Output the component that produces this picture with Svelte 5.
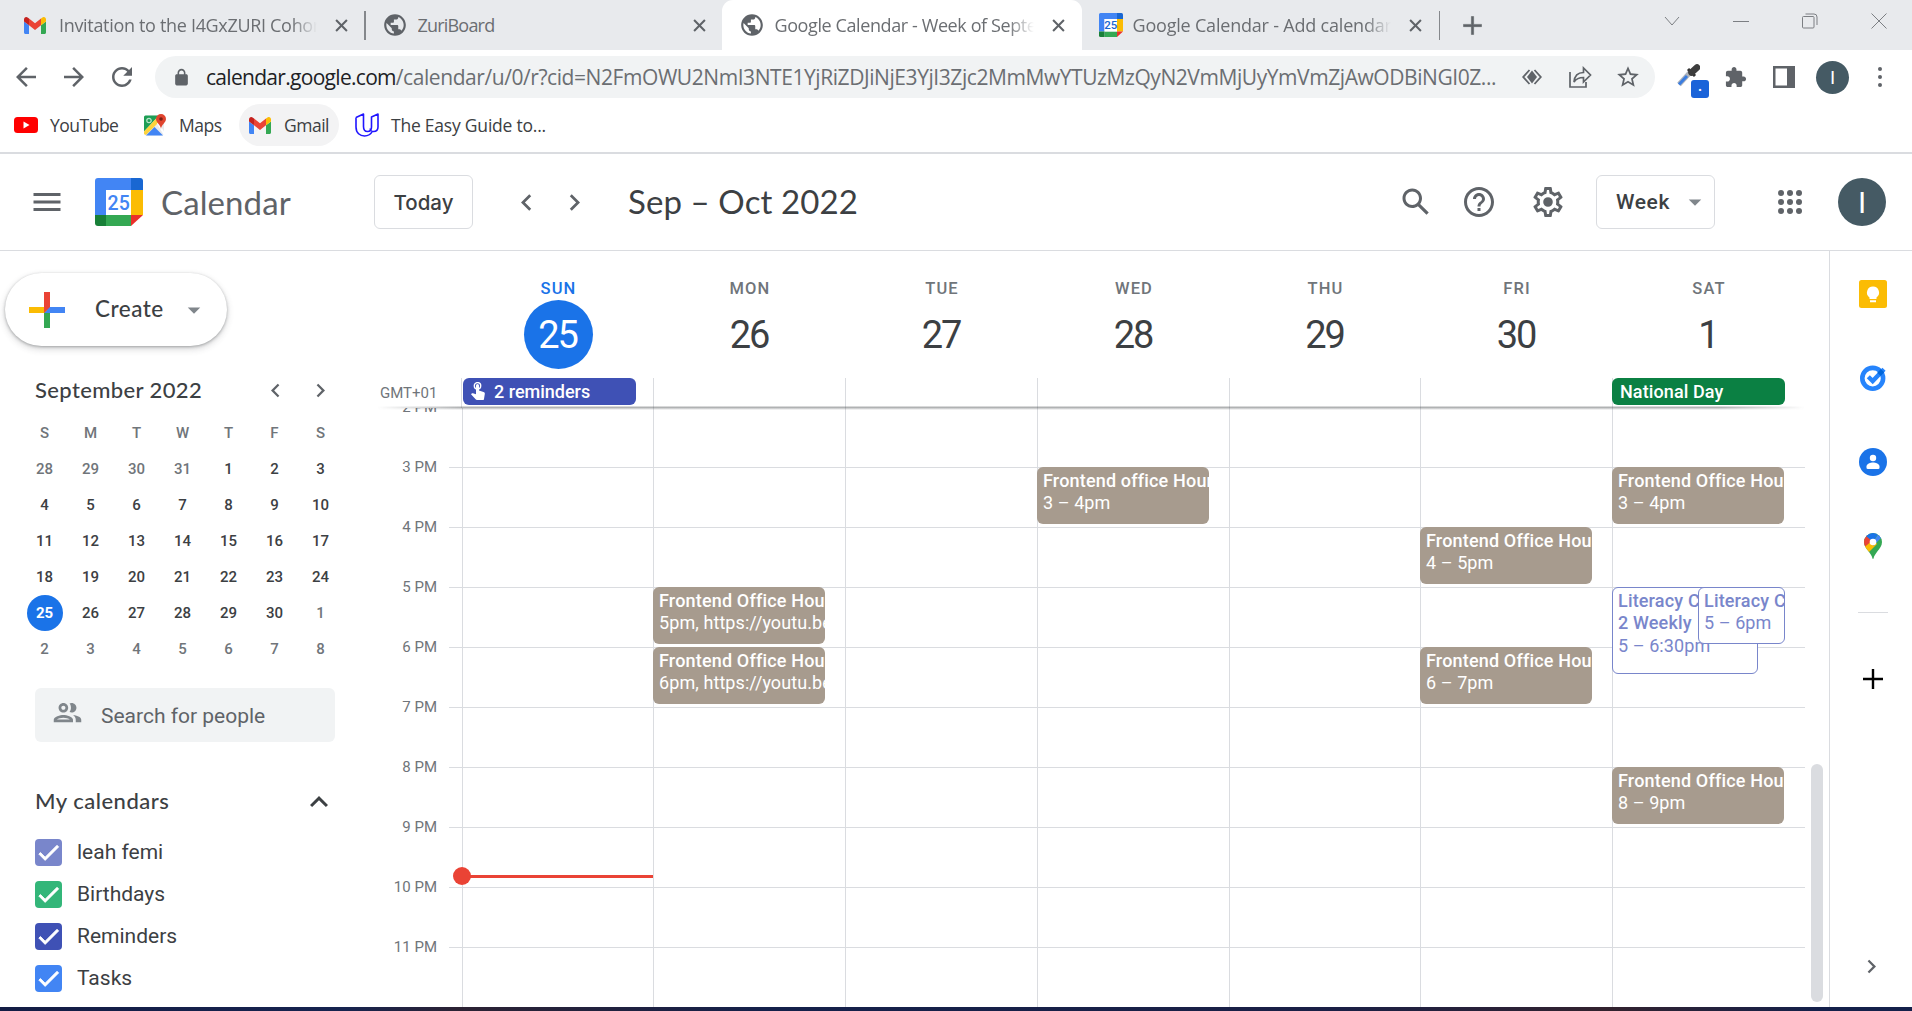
<script>
  const paths = {
    back: 'M20 11H7.83l5.59-5.59L12 4l-8 8 8 8 1.41-1.41L7.83 13H20v-2z',
    forward: 'M12 4l-1.41 1.41L16.17 11H4v2h12.17l-5.58 5.59L12 20l8-8z',
    reload:
      'M17.65 6.35C16.2 4.9 14.21 4 12 4c-4.42 0-7.99 3.58-7.99 8s3.57 8 7.99 8c3.73 0 6.84-2.55 7.73-6h-2.08c-.82 2.33-3.04 4-5.65 4-3.31 0-6-2.69-6-6s2.69-6 6-6c1.66 0 3.14.69 4.22 1.78L13 11h7V4l-2.35 2.35z',
    globe:
      'M12 2C6.48 2 2 6.48 2 12s4.48 10 10 10 10-4.48 10-10S17.52 2 12 2zm-1 17.93c-3.95-.49-7-3.85-7-7.93 0-.62.08-1.21.21-1.79L9 15v1c0 1.1.9 2 2 2v1.93zm6.9-2.54c-.26-.81-1-1.39-1.9-1.39h-1v-3c0-.55-.45-1-1-1H8v-2h2c.55 0 1-.45 1-1V7h2c1.1 0 2-.9 2-2v-.41c2.93 1.19 5 4.06 5 7.41 0 2.08-.8 3.97-2.1 5.39z',
    star: 'M22 9.24l-7.19-.62L12 2 9.19 8.63 2 9.24l5.46 4.73L5.82 21 12 17.27 18.18 21l-1.63-7.03L22 9.24zM12 15.4l-3.76 2.27 1-4.28-3.32-2.88 4.38-.38L12 6.1l1.71 4.04 4.38.38-3.32 2.88 1 4.28L12 15.4z',
    puzzle:
      'M20.5 11H19V7c0-1.1-.9-2-2-2h-4V3.5C13 2.12 11.88 1 10.5 1S8 2.12 8 3.5V5H4c-1.1 0-1.99.9-1.99 2v3.8H3.5c1.49 0 2.7 1.21 2.7 2.7s-1.21 2.7-2.7 2.7H2V20c0 1.1.9 2 2 2h3.8v-1.5c0-1.49 1.21-2.7 2.7-2.7 1.49 0 2.7 1.21 2.7 2.7V22H17c1.1 0 2-.9 2-2v-4h1.5c1.38 0 2.5-1.12 2.5-2.5S21.88 11 20.5 11z',
    search:
      'M20.49 19l-5.73-5.73C15.53 12.2 16 10.91 16 9.5 16 5.91 13.09 3 9.5 3S3 5.91 3 9.5 5.91 16 9.5 16c1.41 0 2.7-.47 3.77-1.24L19 20.49 20.49 19zM5 9.5C5 7.01 7.01 5 9.5 5S14 7.01 14 9.5 11.99 14 9.5 14 5 11.99 5 9.5z',
    help: 'M11 18h2v-2h-2v2zm1-16C6.48 2 2 6.48 2 12s4.48 10 10 10 10-4.48 10-10S17.52 2 12 2zm0 18c-4.41 0-8-3.59-8-8s3.59-8 8-8 8 3.59 8 8-3.59 8-8 8zm0-14c-2.21 0-4 1.79-4 4h2c0-1.1.9-2 2-2s2 .9 2 2c0 2-3 1.75-3 5h2c0-2.25 3-2.5 3-5 0-2.21-1.79-4-4-4z',
    gear: 'M19.43 12.98c.04-.32.07-.64.07-.98 0-.34-.03-.66-.07-.98l2.11-1.65c.19-.15.24-.42.12-.64l-2-3.46c-.09-.16-.26-.25-.44-.25-.06 0-.12.01-.17.03l-2.49 1c-.52-.4-1.08-.73-1.69-.98l-.38-2.65C14.46 2.18 14.25 2 14 2h-4c-.25 0-.46.18-.49.42l-.38 2.65c-.61.25-1.17.59-1.69.98l-2.49-1c-.06-.02-.12-.03-.18-.03-.17 0-.34.09-.43.25l-2 3.46c-.13.22-.07.49.12.64l2.11 1.65c-.04.32-.07.65-.07.98 0 .33.03.66.07.98l-2.11 1.65c-.19.15-.24.42-.12.64l2 3.46c.09.16.26.25.44.25.06 0 .12-.01.17-.03l2.49-1c.52.4 1.08.73 1.69.98l.38 2.65c.03.24.24.42.49.42h4c.25 0 .46-.18.49-.42l.38-2.65c.61-.25 1.17-.59 1.69-.98l2.49 1c.06.02.12.03.18.03.17 0 .34-.09.43-.25l2-3.46c.12-.22.07-.49-.12-.64l-2.11-1.65zm-1.98-1.71c.04.31.05.52.05.73 0 .21-.02.43-.05.73l-.14 1.13.89.7 1.08.84-.7 1.21-1.27-.51-1.04-.42-.9.68c-.43.32-.84.56-1.25.73l-1.06.43-.16 1.13-.2 1.35h-1.4l-.19-1.35-.16-1.13-1.06-.43c-.43-.18-.83-.41-1.23-.71l-.91-.7-1.06.43-1.27.51-.7-1.21 1.08-.84.89-.7-.14-1.13c-.03-.31-.05-.54-.05-.74s.02-.43.05-.73l.14-1.13-.89-.7-1.08-.84.7-1.21 1.27.51 1.04.42.9-.68c.43-.32.84-.56 1.25-.73l1.06-.43.16-1.13.2-1.35h1.39l.19 1.35.16 1.13 1.06.43c.43.18.83.41 1.23.71l.91.7 1.06-.43 1.27-.51.7 1.21-1.07.85-.89.7.14 1.13zM12 8.8a3.2 3.2 0 1 0 0 6.4 3.2 3.2 0 0 0 0-6.4z',
    menu: 'M3 18h18v-2H3v2zm0-5h18v-2H3v2zm0-7v2h18V6H3z',
    left: 'M15.41 7.41L14 6l-6 6 6 6 1.41-1.41L10.83 12z',
    right: 'M10 6L8.59 7.41 13.17 12l-4.58 4.59L10 18l6-6z',
    up: 'M12 8l-6 6 1.41 1.41L12 10.83l4.59 4.58L18 14z',
    down: 'M7 10l5 5 5-5z',
    check: 'M9 16.17L4.83 12l-1.42 1.41L9 19 21 7l-1.41-1.41z',
    people:
      'M9 13.75c-2.34 0-7 1.17-7 3.5V19h14v-1.75c0-2.33-4.66-3.5-7-3.5zM4.34 17c.84-.58 2.87-1.25 4.66-1.25s3.82.67 4.66 1.25H4.34zM9 12c1.93 0 3.5-1.57 3.5-3.5S10.93 5 9 5 5.5 6.57 5.5 8.5 7.07 12 9 12zm0-5c.83 0 1.5.67 1.5 1.5S9.83 10 9 10s-1.5-.67-1.5-1.5S8.17 7 9 7zm7.04 6.81c1.16.84 1.96 1.96 1.96 3.44V19h4v-1.75c0-2.02-3.5-3.17-5.96-3.44zM15 12c1.93 0 3.5-1.57 3.5-3.5S16.93 5 15 5c-.54 0-1.04.13-1.5.35.63.89 1 1.98 1 3.15s-.37 2.26-1 3.15c.46.22.96.35 1.5.35z',
    lock: 'M18 8h-1V6c0-2.76-2.24-5-5-5S7 3.24 7 6v2H6c-1.1 0-2 .9-2 2v10c0 1.1.9 2 2 2h12c1.1 0 2-.9 2-2V10c0-1.1-.9-2-2-2zM9 6c0-1.66 1.34-3 3-3s3 1.34 3 3v2H9V6z',
    plus: 'M20 13h-7v7h-2v-7H4v-2h7V4h2v7h7v2z'
  };

  const weekdays = ['S', 'M', 'T', 'W', 'T', 'F', 'S'];
  // Six weeks, beginning on Sunday 28 August
  const monthCells = Array.from({ length: 42 }, (_, i) => {
    const n = i - 3;
    if (n < 1) return { label: 31 + n, muted: true };
    if (n > 30) return { label: n - 30, muted: true };
    return { label: n, muted: false, today: n === 25 };
  });

  const calendars = [
    { name: 'leah femi', tone: 'lavender' },
    { name: 'Birthdays', tone: 'green' },
    { name: 'Reminders', tone: 'indigo' },
    { name: 'Tasks', tone: 'blue' }
  ];

  const firstLine = 15; // the hour whose line sits first under the sticky header
  const hourHeight = 60;
  const hours = [15, 16, 17, 18, 19, 20, 21, 22, 23];
  const office = 'Frontend Office Hours';

  const days = [
    { name: 'SUN', date: 25, today: true, chip: 'reminders', events: [] },
    {
      name: 'MON',
      date: 26,
      events: [
        { title: office, time: '5pm, https://youtu.be/live', start: 17, end: 18 },
        { title: office, time: '6pm, https://youtu.be/live', start: 18, end: 19 }
      ]
    },
    { name: 'TUE', date: 27, events: [] },
    { name: 'WED', date: 28, events: [{ title: 'Frontend office Hours', time: '3 – 4pm', start: 15, end: 16 }] },
    { name: 'THU', date: 29, events: [] },
    {
      name: 'FRI',
      date: 30,
      events: [
        { title: office, time: '4 – 5pm', start: 16, end: 17 },
        { title: office, time: '6 – 7pm', start: 18, end: 19 }
      ]
    },
    {
      name: 'SAT',
      date: 1,
      chip: 'national',
      events: [
        { title: office, time: '3 – 4pm', start: 15, end: 16 },
        { title: 'Literacy Class', more: '2 Weekly', time: '5 – 6:30pm', start: 17, end: 18.5, kind: 'pending wide' },
        { title: 'Literacy Class', time: '5 – 6pm', start: 17, end: 18, kind: 'pending narrow' },
        { title: office, time: '8 – 9pm', start: 20, end: 21 }
      ]
    }
  ];

  const top = (h) => 59 + (h - firstLine) * hourHeight;
</script>

{#snippet icon(name, cls)}
  <svg class="ico {cls}" viewBox="0 0 24 24"><path d={paths[name]} /></svg>
{/snippet}

{#snippet gmail(cls)}
  <svg class={cls} viewBox="52 42 88 66" preserveAspectRatio="none">
    <path fill="#4285f4" d="M58 108h14V74L52 59v43c0 3.32 2.69 6 6 6" />
    <path fill="#34a853" d="M120 108h14c3.32 0 6-2.69 6-6V59l-20 15" />
    <path fill="#fbbc04" d="M120 48v26l20-15v-8c0-7.42-8.47-11.65-14.4-7.2" />
    <path fill="#ea4335" d="M72 74V48l24 18 24-18v26L96 92" />
    <path fill="#c5221f" d="M52 51v8l20 15V48l-5.6-4.2c-5.94-4.45-14.4-.22-14.4 7.2" />
  </svg>
{/snippet}

{#snippet calLogo(cls, ink, size)}
  <svg class={cls} viewBox="0 0 48 48">
    <path fill="#4285f4" d="M3 0h33v12H11v25H0V3a3 3 0 0 1 3-3z" />
    <path fill="#1967d2" d="M36 0h9a3 3 0 0 1 3 3v9H36z" />
    <path fill="#fbbc04" d="M36 12h12v25H36z" />
    <path fill="#ea2f2a" d="M36 37h12L36 48z" />
    <path fill="#34a853" d="M11 37h25v11H11z" />
    <path fill="#188038" d="M0 37h11v11H3a3 3 0 0 1-3-3z" />
    <path fill="#fff" d="M11 12h25v25H11z" />
    <text x="23.7" y={24.5 + size * 0.36} text-anchor="middle" font-family="Roboto, sans-serif" font-size={size} font-weight="500" fill={ink}>25</text>
  </svg>
{/snippet}

<div class="screen">
  <header class="tabs">
    <div class="tab first">
      {@render gmail('fav-gmail')}
      <span class="title fade t1">Invitation to the I4GxZURI Cohort</span>
      <svg class="close" viewBox="0 0 12 12"><path d="M1 1l10 10M11 1L1 11" /></svg>
    </div>
    <i class="tab-sep"></i>
    <div class="tab second">
      {@render icon('globe', 'fav-globe')}
      <span class="title t2">ZuriBoard</span>
      <svg class="close" viewBox="0 0 12 12"><path d="M1 1l10 10M11 1L1 11" /></svg>
    </div>
    <div class="tab active">
      {@render icon('globe', 'fav-globe')}
      <span class="title fade t3">Google Calendar - Week of Septe</span>
      <svg class="close" viewBox="0 0 12 12"><path d="M1 1l10 10M11 1L1 11" /></svg>
    </div>
    <div class="tab fourth">
      {@render calLogo('fav-cal', '#1967d2', 23)}
      <span class="title fade t4">Google Calendar - Add calendar fr</span>
      <svg class="close" viewBox="0 0 12 12"><path d="M1 1l10 10M11 1L1 11" /></svg>
    </div>
    <i class="tab-sep"></i>
    {@render icon('plus', 'new-tab')}
    <div class="window-buttons">
      <svg viewBox="0 0 16 16"><path d="M1 4l7 8 7-8" /></svg>
      <svg viewBox="0 0 16 16"><path d="M0 8.5h16" /></svg>
      <svg viewBox="0 0 16 16"><path d="M.5 4.500a1 1 0 0 1 1-1h9.500a1 1 0 0 1 1 1v9.500a1 1 0 0 1-1 1H1.500a1 1 0 0 1-1-1zM3.500 1h8.500a3 3 0 0 1 3 3v8" /></svg>
      <svg viewBox="0 0 16 16"><path d="M.5 .5l15 15M15.500 .5l-15 15" /></svg>
    </div>
  </header>

  <div class="toolbar">
    {@render icon('back', 'nav')}
    {@render icon('forward', 'nav')}
    {@render icon('reload', 'nav')}
    <div class="omnibox">
      {@render icon('lock', 'lock')}
      <span class="url"><b>calendar.google.com</b>/calendar/u/0/r?cid=N2FmOWU2NmI3NTE1YjRiZDJiNjE3YjI3Zjc2MmMwYTUzMzQyN2VmMjUyYmVmZjAwODBiNGI0Z...</span>
      <svg class="diamond" viewBox="0 0 20 16">
        <path class="solid" d="M10 1.500l5 6.500-5 6.500L5 8z" />
        <path class="line" d="M7.500 1L1.200 8l6.300 7M12.500 1l6.300 7-6.300 7" />
      </svg>
      <svg class="share" viewBox="0 0 23 22"><path d="M1 6v15h16v-5M5 16c.5-6 4-9.500 9.500-9.500V2l7 7-7 7v-4.500C10 11.500 7 13 5 16z" /></svg>
      {@render icon('star', 'star')}
    </div>
    <div class="picker">
      <svg viewBox="0 0 24 24">
        <path d="M3 20.500L14 8.500" stroke="#aeb4bd" stroke-width="5" />
        <path d="M3 20.500L11 12" stroke="#3b7de0" stroke-width="3" />
        <path d="M12 5l7 7" stroke="#333" stroke-width="3" />
        <path d="M15.500 8.500L21 3.500" stroke="#3d3d3d" stroke-width="6.500" stroke-linecap="round" />
      </svg>
      <span class="badge">.</span>
    </div>
    {@render icon('puzzle', 'puzzle')}
    <svg class="panel-icon" viewBox="0 0 22 22"><path fill-rule="evenodd" d="M0 0h22v22H0zM2.500 2.500v17H14v-17z" /></svg>
    <span class="avatar small">I</span>
    <div class="dots"><i></i><i></i><i></i></div>
  </div>

  <nav class="bookmarks">
    <a class="bm youtube" href="#youtube">
      <svg viewBox="0 0 24 16"><rect width="24" height="16" rx="3.500" fill="#f00" /><path fill="#fff" d="M9.500 4.600v6.800l6-3.400z" /></svg>
      <span>YouTube</span>
    </a>
    <a class="bm maps" href="#maps">
      <svg viewBox="0 0 22 22">
        <rect y="1.500" width="20" height="20" rx="2" fill="#e8eaed" />
        <path fill="#1e9e55" d="M1.500 1.500H15L0 17.500V3a1.500 1.500 0 0 1 1.500-1.500z" />
        <path fill="#fdd33c" d="M13.500 3L0 17.500V20l2 1L17 6z" />
        <path fill="#4285f4" d="M10.500 13l8.500 8.500H2z" />
        <path fill="#fff" d="M13 9.500l1.500-1 5.500 9v4z" />
        <path fill="#e0452f" d="M17 0a5 5 0 0 1 5 5c0 4-4.500 5-5 10-.5-5-5-6-5-10a5 5 0 0 1 5-5z" />
        <circle cx="17" cy="5" r="1.800" fill="#7b1f14" />
        <circle cx="5" cy="6.500" r="2.200" fill="none" stroke="#b9e6cb" stroke-width="1.200" />
      </svg>
      <span>Maps</span>
    </a>
    <a class="bm mail" href="#gmail">{@render gmail('bm-gmail')}<span>Gmail</span></a>
    <a class="bm guide" href="#guide">
      <svg viewBox="0 0 24 24"><path fill="none" stroke="#2015ff" stroke-width="1.600" stroke-linejoin="round" d="M1 4.500L8.500 1v12.500c0 3 1.500 5 4 5 3 0 4-2 4-4.500V4l6.500-3v13c0 3-2 4.500-4.500 4.500-2 0-3.300-1-3.300-3M1 4.500V14c0 6 4 9 8.500 9 4 0 6.500-2 8-5" /></svg>
      <span>The Easy Guide to...</span>
    </a>
  </nav>

  <div class="app-bar">
    {@render icon('menu', 'hamburger')}
    {@render calLogo('logo', '#4285f4', 19.5)}
    <span class="brand">Calendar</span>
    <button class="today-btn"><span>Today</span></button>
    {@render icon('left', 'prev')}
    {@render icon('right', 'next')}
    <h1>Sep – Oct 2022</h1>
    <div class="bar-right">
      {@render icon('search', 'i36')}
      {@render icon('help', 'i36 help')}
      {@render icon('gear', 'i36 gear')}
      <button class="week-btn"><span>Week</span>{@render icon('down', 'caret')}</button>
      <svg class="apps" viewBox="0 0 24 24">
        {#each [3, 12, 21] as cy}{#each [3, 12, 21] as cx}<circle {cx} {cy} r="3" />{/each}{/each}
      </svg>
      <span class="avatar big">I</span>
    </div>
  </div>

  <div class="body">
    <aside class="sidebar">
      <button class="create">
        <svg viewBox="0 0 36 36">
          <path fill="#34a853" d="M15 18h6v18h-6z" />
          <path fill="#4285f4" d="M18 15h18v6H15z" />
          <path fill="#fbbc04" d="M0 15h18v3l-3 3H0z" />
          <path fill="#ea4335" d="M15 0h6v15l-6 6z" />
        </svg>
        <span>Create</span>
        {@render icon('down', 'caret')}
      </button>

      <div class="month-head">
        <h2>September 2022</h2>
        {@render icon('left', 'i27')}
        {@render icon('right', 'i27 gap')}
      </div>
      <div class="month">
        {#each weekdays as d}<span class="wd">{d}</span>{/each}
        {#each monthCells as c}
          <span class="md" class:muted={c.muted} class:now={c.today}>{c.label}</span>
        {/each}
      </div>

      <div class="people">{@render icon('people', 'people-ico')}<span>Search for people</span></div>

      <div class="cals-head"><h2>My calendars</h2>{@render icon('up', 'i36 dark')}</div>
      <ul>
        {#each calendars as c}
          <li><span class="box {c.tone}">{@render icon('check', 'tick')}</span><span>{c.name}</span></li>
        {/each}
      </ul>
    </aside>

    <main>
      <div class="week-head">
        {#each days as d}
          <div class="day-head" class:now={d.today}>
            <span class="dn">{d.name}</span>
            <span class="dd">{d.date}</span>
          </div>
        {/each}
      </div>
      <div class="allday">
        <span class="zone">GMT+01</span>
        <div class="allday-cols">
          {#each days as d}
            <div class="allday-cell">
              {#if d.chip === 'reminders'}
                <span class="chip reminders">
                  <svg viewBox="0 0 14 18">
                    <circle cx="6.500" cy="3.800" r="3.200" fill="none" stroke="#fff" stroke-width="1.400" />
                    <path fill="#fff" d="M5 3.500a1.500 1.500 0 0 1 3 0v5l4.500 1.500c1 .4 1.500 1 1.300 2l-.8 5c0 .6-.5 1-1 1H6c-.6 0-1-.3-1.400-.8L0 12.300l.7-.8c.4-.4.8-.4 1.300-.2l3 1z" />
                  </svg>
                  2 reminders
                </span>
              {:else if d.chip === 'national'}
                <span class="chip national">National Day</span>
              {/if}
            </div>
          {/each}
        </div>
      </div>
      <div class="grid">
        <div class="labels">
          <span>2 PM</span>
          {#each hours as h}<span>{h - 12} PM</span>{/each}
        </div>
        <div class="board">
          {#each days as d}
            <div class="col">
              {#each d.events as e}
                <div class="event {e.kind ?? ''}" style="top: {top(e.start)}px; height: {(e.end - e.start) * hourHeight - 3}px">
                  <strong>{e.title}</strong>
                  {#if e.more}<strong>{e.more}</strong>{/if}
                  <span>{e.time}</span>
                </div>
              {/each}
              {#if d.today}<div class="now-line"></div>{/if}
            </div>
          {/each}
        </div>
        <div class="scroll"><i></i></div>
      </div>
    </main>

    <aside class="rail">
      <svg class="keep" viewBox="0 0 28 28">
        <rect width="28" height="28" rx="2.500" fill="#fbbc04" />
        <path fill="#fff" d="M14 6.500a6 6 0 0 1 3.500 10.900V19h-7v-1.600A6 6 0 0 1 14 6.500zM11 20.300h6v1.900h-6z" />
      </svg>
      <svg class="tasks" viewBox="0 0 27 26">
        <circle cx="12.700" cy="13.300" r="10.400" fill="none" stroke="#2684fc" stroke-width="4.600" />
        <path d="M8.300 11.700l4.400 4.300L24 4.200" fill="none" stroke="#2684fc" stroke-width="4.400" />
        <path d="M19 9.300l3.500-3.600" stroke="#0066da" stroke-width="4.800" />
      </svg>
      <svg class="contacts" viewBox="0 0 28 28">
        <circle cx="14" cy="14" r="14" fill="#1a73e8" />
        <circle cx="14" cy="10" r="3.200" fill="#fff" />
        <path fill="#fff" d="M7.500 18.500c0-2.800 4-4 6.500-4s6.500 1.200 6.500 4v1.200a1.300 1.300 0 0 1-1.300 1.300H8.800a1.300 1.300 0 0 1-1.300-1.300z" />
      </svg>
      <svg class="pin" viewBox="0 0 18 26">
        <clipPath id="drop"><path d="M9 0a9 9 0 0 1 9 9c0 4-2.300 6.300-4.500 9.300C11.500 21 10 23 9.600 25.300c-.2.900-1 .9-1.200 0C8 23 6.500 21 4.500 18.300 2.300 15.300 0 13 0 9a9 9 0 0 1 9-9z" /></clipPath>
        <g clip-path="url(#drop)">
          <path fill="#34a853" d="M0 0h18v26H0z" />
          <path fill="#fbbc04" d="M0 14L9 6l4 5L4 20z" />
          <path fill="#ea4335" d="M0 0v14.500L9 7z" />
          <path fill="#1a73e8" d="M2 3L9 9l6-10H2z" />
          <path fill="#4285f4" d="M9 9l6-9 3 4-9 9z" />
        </g>
        <circle cx="9" cy="9" r="3.300" fill="#fff" />
      </svg>
      <i class="rule"></i>
      <svg class="add" viewBox="0 0 20 20"><path d="M10 0v20M0 10h20" stroke="#000" stroke-width="2.400" /></svg>
      {@render icon('right', 'i27 collapse')}
    </aside>
  </div>
  <footer></footer>
</div>

<style>
  :global(body) {
    margin: 0;
    background: #fff;
    overflow: hidden;
  }
  .screen,
  .screen * {
    box-sizing: border-box;
  }
  .screen {
    width: 1912px;
    height: 1011px;
    display: flex;
    flex-direction: column;
    background: #fff;
    font-family: Roboto, sans-serif;
    color: #3c4043;
    white-space: nowrap;
    overflow: hidden;
  }
  .ico {
    display: block;
    flex: none;
    fill: #5f6368;
  }
  button {
    font: inherit;
    color: inherit;
    background: #fff;
    padding: 0;
    flex: none;
  }
  h1,
  h2,
  ul {
    margin: 0;
    padding: 0;
    list-style: none;
    font-weight: 400;
  }

  /* Tab strip */
  .tabs {
    flex: none;
    height: 50px;
    background: #e8eaed;
    display: flex;
    align-items: center;
    font-family: 'Open Sans', sans-serif;
    font-size: 18px;
    color: #6b6e72;
  }
  .tab {
    height: 50px;
    flex: none;
    display: flex;
    align-items: center;
  }
  .first { width: 364px; padding: 0 16px 0 24px; }
  .second { width: 356px; padding: 0 16px 0 16px; }
  .active {
    width: 360px;
    padding: 0 17px 0 17px;
    background: #fff;
    border-radius: 11px 11px 0 0;
  }
  .fourth { width: 357px; padding: 0 17px 0 17px; }
  .tab-sep {
    width: 1.5px;
    height: 29px;
    background: #85888c;
    flex: none;
  }
  .fav-gmail { width: 22px; height: 17px; flex: none; }
  .fav-globe { width: 26px; height: 26px; }
  .fav-cal { width: 24px; height: 24px; flex: none; }
  .title {
    flex: 1;
    overflow: hidden;
    margin-left: 10px;
    line-height: 30px;
  }
  .t1 { margin: 0 18px 0 13px; letter-spacing: -0.32px; }
  .t2 { letter-spacing: -0.8px; }
  .t3 { margin-right: 18px; letter-spacing: -0.4px; }
  .t4 { margin-right: 18px; letter-spacing: -0.2px; }
  .fade {
    -webkit-mask-image: linear-gradient(90deg, #000 90%, transparent);
    mask-image: linear-gradient(90deg, #000 90%, transparent);
  }
  .close {
    width: 13px;
    height: 13px;
    flex: none;
    stroke: #5f6368;
    stroke-width: 1.9;
  }
  .new-tab {
    width: 27px;
    height: 27px;
    margin-left: 19px;
    stroke: #5f6368;
    stroke-width: 0.5;
  }
  .window-buttons {
    margin-left: auto;
    margin-right: 25px;
    display: flex;
    gap: 53px;
    padding-bottom: 8px;
  }
  .window-buttons svg {
    width: 16px;
    height: 16px;
    fill: none;
    stroke: #7c7f83;
    stroke-width: 1;
  }

  /* Address bar */
  .toolbar {
    flex: none;
    height: 54px;
    display: flex;
    align-items: center;
    padding-left: 11px;
  }
  .nav { width: 30px; height: 30px; margin-right: 18px; }
  .omnibox {
    width: 1500px;
    height: 42px;
    border-radius: 21px;
    background: #f1f3f4;
    display: flex;
    align-items: center;
    flex: none;
  }
  .lock { width: 19px; height: 19px; margin-left: 17px; }
  .url {
    width: 1296px;
    margin-left: 15px;
    font-family: 'Open Sans', sans-serif;
    font-size: 21px;
    letter-spacing: -0.43px;
    color: #6b6e72;
    line-height: 30px;
  }
  .url b { font-weight: 400; color: #202124; letter-spacing: -0.7px; }
  .diamond { width: 20px; height: 16px; margin-left: 20px; flex: none; }
  .solid { fill: #5f6368; }
  .line { fill: none; stroke: #5f6368; stroke-width: 1.8; }
  .share {
    width: 23px;
    height: 22px;
    margin-left: 27px;
    flex: none;
    fill: none;
    stroke: #5f6368;
    stroke-width: 1.7;
  }
  .star { width: 26px; height: 26px; margin-left: 23px; }
  .picker {
    position: relative;
    width: 26px;
    height: 26px;
    margin-left: 21px;
    flex: none;
  }
  .picker svg { width: 24px; height: 24px; display: block; }
  .badge {
    position: absolute;
    left: 15px;
    top: 16px;
    width: 18px;
    height: 18px;
    border-radius: 3px;
    background: #1a63d9;
    color: #fff;
    font-size: 14px;
    font-weight: 700;
    line-height: 13px;
    text-align: center;
  }
  .puzzle { width: 23px; height: 23px; margin-left: 22px; }
  .panel-icon { width: 22px; height: 22px; margin-left: 26px; fill: #5f6368; flex: none; }
  .avatar {
    flex: none;
    border-radius: 50%;
    background: #455a64;
    color: #fff;
    display: grid;
    place-items: center;
    font-weight: 400;
  }
  .small { width: 33px; height: 33px; margin-left: 21px; font-size: 19px; }
  .dots {
    margin-left: 29px;
    display: flex;
    flex-direction: column;
    gap: 4px;
  }
  .dots i { width: 4px; height: 4px; border-radius: 50%; background: #5f6368; }

  /* Bookmarks */
  .bookmarks {
    flex: none;
    height: 50px;
    border-bottom: 2px solid #dadce0;
    display: flex;
    align-items: flex-start;
    font-family: 'Open Sans', sans-serif;
    font-size: 17.5px;
    letter-spacing: -0.5px;
  }
  .bm {
    height: 42px;
    flex: none;
    display: flex;
    align-items: center;
    color: #3c4043;
    text-decoration: none;
  }
  .bm svg { flex: none; }
  .bm span { line-height: 30px; }
  .youtube { width: 144px; padding-left: 14px; gap: 12px; }
  .youtube svg { width: 24px; height: 16px; }
  .maps { width: 95px; gap: 13px; }
  .maps svg { width: 22px; height: 22px; }
  .mail { width: 100px; padding-left: 10px; gap: 13px; border-radius: 21px; background: #f3f3f4; }
  .bm-gmail { width: 22px; height: 17px; }
  .guide { margin-left: 16px; gap: 12px; letter-spacing: -0.22px; }
  .guide svg { width: 24px; height: 24px; }

  /* Calendar header */
  .app-bar {
    flex: none;
    height: 97px;
    border-bottom: 1px solid #dadce0;
    display: flex;
    align-items: center;
    padding-left: 29px;
  }
  .hamburger { width: 36px; height: 36px; }
  .logo { width: 48px; height: 48px; margin-left: 30px; flex: none; }
  .brand {
    width: 213px;
    margin-left: 18px;
    font-family: Lato, sans-serif;
    font-size: 33px;
    color: #5f6368;
    line-height: 44px;
    letter-spacing: 0.1px;
  }
  .today-btn {
    width: 99px;
    height: 54px;
    border: 1px solid #dadce0;
    border-radius: 6px;
    font-family: Inter, sans-serif;
    font-size: 20.5px;
    font-weight: 500;
  }
  .prev { width: 33px; height: 33px; margin-left: 37px; }
  .next { width: 33px; height: 33px; margin-left: 15px; }
  h1 {
    margin-left: 37px;
    font-family: Lato, sans-serif;
    font-size: 33px;
    line-height: 44px;
    padding-bottom: 2px;
    letter-spacing: 0.1px;
  }
  .bar-right {
    margin-left: auto;
    margin-right: 26px;
    display: flex;
    align-items: center;
  }
  .i36 { width: 36px; height: 36px; }
  .help { margin-left: 27px; }
  .gear { margin-left: 33px; }
  .week-btn {
    width: 119px;
    height: 54px;
    margin-left: 30px;
    border: 1px solid #dadce0;
    border-radius: 6px;
    display: flex;
    align-items: center;
    padding-left: 19px;
    font-size: 21px;
    font-weight: 500;
    letter-spacing: 0.6px;
  }
  .week-btn span { width: 64px; text-align: left; }
  .caret { width: 30px; height: 30px; fill: #80868b; }
  .apps { width: 24px; height: 24px; margin-left: 63px; fill: #5f6368; }
  .big { width: 48px; height: 48px; margin-left: 36px; font-size: 30px; }

  /* Sidebar */
  .body {
    flex: 1;
    min-height: 0;
    display: flex;
  }
  .sidebar {
    width: 370px;
    flex: none;
    padding: 22px 0 0 5px;
  }
  .create {
    width: 222px;
    height: 73px;
    border: 0;
    border-radius: 37px;
    box-shadow: 0 1px 3px rgba(60, 64, 67, 0.4), 0 3px 6px 1px rgba(60, 64, 67, 0.16);
    display: flex;
    align-items: center;
    padding-left: 24px;
    font-family: Lato, sans-serif;
    font-size: 22.5px;
    font-weight: 500;
    letter-spacing: 0.5px;
  }
  .create svg:first-child { width: 36px; height: 36px; }
  .create span { width: 84px; margin: -2px 0 0 30px; text-align: left; }
  h2 {
    font-family: Lato, sans-serif;
    font-size: 22px;
    font-weight: 500;
    letter-spacing: 0.38px;
    line-height: 30px;
    flex: 1;
  }
  .month-head {
    width: 330px;
    display: flex;
    align-items: center;
    margin: 29px 0 10px 30px;
    padding-right: 31px;
  }
  .i27 { width: 27px; height: 27px; }
  .gap { margin-left: 18px; }
  .month {
    width: 322px;
    margin-left: 16.5px;
    display: grid;
    grid-template-columns: repeat(7, 46px);
    grid-auto-rows: 36px;
    justify-items: center;
    align-items: center;
    font-size: 15px;
    font-weight: 500;
  }
  .wd,
  .muted { color: #70757a; }
  .md {
    width: 36px;
    height: 36px;
    line-height: 37px;
    text-align: center;
    border-radius: 50%;
  }
  .md.now { background: #1a73e8; color: #fff; font-weight: 700; }
  .people {
    width: 300px;
    height: 54px;
    margin: 21px 0 0 30px;
    border-radius: 6px;
    background: #f1f3f4;
    display: flex;
    align-items: center;
    padding-left: 16px;
    font-size: 21px;
    color: #5f6368;
  }
  .people-ico { width: 33px; height: 33px; margin-top: -6px; fill: #80868b; }
  .people span { margin: 2px 0 0 17px; }
  .cals-head {
    width: 302px;
    display: flex;
    align-items: center;
    margin: 42px 0 0 30px;
  }
  .cals-head h2 { padding-bottom: 2px; letter-spacing: 0.5px; }
  .dark { fill: #3c4043; }
  ul { padding: 11px 0 0 30px; }
  li {
    height: 42px;
    display: flex;
    align-items: center;
    font-size: 21px;
  }
  .box {
    width: 27px;
    height: 27px;
    margin-right: 15px;
    border-radius: 4px;
    display: grid;
    place-items: center;
  }
  .tick { width: 27px; height: 27px; fill: #fff; stroke: #fff; stroke-width: 0.8; }
  .lavender { background: #7986cb; }
  .green { background: #33b679; }
  .indigo { background: #3f51b5; }
  .blue { background: #4285f4; }

  /* Week view */
  main {
    width: 1460px;
    flex: none;
    display: flex;
    flex-direction: column;
    border-right: 1px solid #dadce0;
  }
  .week-head {
    height: 127px;
    flex: none;
    display: grid;
    grid-template-columns: 191px 192px 192px 192px 191px 192px 192px;
    padding-left: 93px;
  }
  .day-head {
    display: flex;
    flex-direction: column;
    align-items: center;
    padding-top: 27px;
  }
  .dn {
    font-size: 16.5px;
    font-weight: 500;
    letter-spacing: 1.1px;
    line-height: 22px;
    color: #70757a;
  }
  .dd {
    width: 69px;
    height: 69px;
    border-radius: 50%;
    font-size: 38px;
    line-height: 70px;
    text-align: center;
    letter-spacing: -2px;
    padding-right: 2px;
  }
  .now .dn { color: #1a73e8; }
  .now .dd { background: #1a73e8; color: #fff; }
  .allday {
    position: relative;
    z-index: 2;
    height: 30px;
    flex: none;
    display: flex;
    background: #fff;
    width: 1435px;
  }
  /* Scroll shadow that fades out at both ends */
  .allday::after {
    content: '';
    position: absolute;
    left: 7px;
    right: 0;
    bottom: -2px;
    height: 4px;
    background: linear-gradient(rgba(60, 64, 67, 0.08), rgba(60, 64, 67, 0.42) 35%, rgba(60, 64, 67, 0));
    -webkit-mask-image: linear-gradient(90deg, transparent, #000 6%, #000 94%, transparent);
    mask-image: linear-gradient(90deg, transparent, #000 6%, #000 94%, transparent);
  }
  .zone {
    width: 91px;
    padding: 6px 0 0 10px;
    font-size: 15px;
    line-height: 18px;
    color: #70757a;
  }
  .allday-cols {
    display: grid;
    grid-template-columns: 192px 192px 192px 192px 191px 192px 192px;
  }
  .allday-cell { border-left: 1px solid #dadce0; padding-left: 1px; }
  .chip {
    width: 173px;
    height: 27px;
    border-radius: 6px;
    color: #fff;
    font-size: 18px;
    font-weight: 500;
    line-height: 25px;
    display: flex;
    align-items: center;
    padding: 0 0 1px 8px;
  }
  .chip svg { width: 14px; height: 18px; margin-right: 9px; }
  .reminders { background: #3f51b5; }
  .national { background: #0b8043; padding-left: 8px; margin-left: -2px; letter-spacing: 0.1px; }

  .grid {
    flex: 1;
    min-height: 0;
    display: flex;
    overflow: hidden;
  }
  .labels {
    width: 79px;
    flex: none;
    padding-right: 12px;
    display: flex;
    flex-direction: column;
    text-align: right;
    font-size: 15px;
    line-height: 60px;
    color: #70757a;
    margin-top: -31px;
  }
  .labels span { height: 60px; flex: none; }
  .board {
    width: 1356px;
    flex: none;
    display: grid;
    grid-template-columns: 191px 192px 192px 192px 191px 192px 1fr;
    padding-left: 13px;
    height: 660px;
    background: repeating-linear-gradient(#dadce0 0 1px, transparent 1px 60px) 0 59px / 100% 600px no-repeat;
  }
  .col { position: relative; border-left: 1px solid #dadce0; }
  .event {
    position: absolute;
    left: -1px;
    width: 172px;
    border-radius: 6px;
    background: #a79b8e;
    color: #fff;
    font-size: 18px;
    line-height: 22px;
    padding: 3px 0 0 6px;
    overflow: hidden;
  }
  .event strong,
  .event span { display: block; font-weight: 400; }
  .event strong { font-weight: 500; letter-spacing: 0.17px; }
  .event span { letter-spacing: 0.08px; }
  .pending {
    background: #fff;
    border: 1px solid #7986cb;
    color: #7986cb;
    padding: 2px 0 0 5px;
  }
  .wide { width: 146px; }
  .wide span { padding-top: 1px; }
  .narrow { left: 85px; width: 86.5px; }
  .now-line {
    position: absolute;
    top: 467px;
    left: 0;
    right: 0;
    height: 3px;
    background: #ea4335;
  }
  .now-line::before {
    content: '';
    position: absolute;
    left: -10px;
    top: -8px;
    width: 18px;
    height: 18px;
    border-radius: 50%;
    background: #ea4335;
  }
  .scroll { padding: 356px 0 0 6px; }
  .scroll i { display: block; width: 12px; height: 238px; border-radius: 6px; background: #dadce0; }

  /* Right rail */
  .rail {
    flex: 1;
    display: flex;
    flex-direction: column;
    align-items: center;
    padding: 29px 0 0 4px;
  }
  .rail svg { flex: none; }
  .keep { width: 28px; height: 28px; }
  .tasks { width: 27px; height: 26px; margin-top: 57px; }
  .contacts { width: 28px; height: 28px; margin-top: 57px; }
  .pin { width: 18px; height: 26px; margin-top: 57px; }
  .rule { width: 30px; height: 1px; margin-top: 53px; background: #dadce0; }
  .add { width: 20px; height: 20px; margin-top: 56px; }
  .collapse { margin: 264px 3px 0 0; }

  footer {
    flex: none;
    height: 4px;
    background: linear-gradient(90deg, #131c44 0, #16234f 18%, #2c2233 24%, #14204a 40%, #1a1f45 70%, #33222e 84%, #14204a 95%);
  }
</style>
